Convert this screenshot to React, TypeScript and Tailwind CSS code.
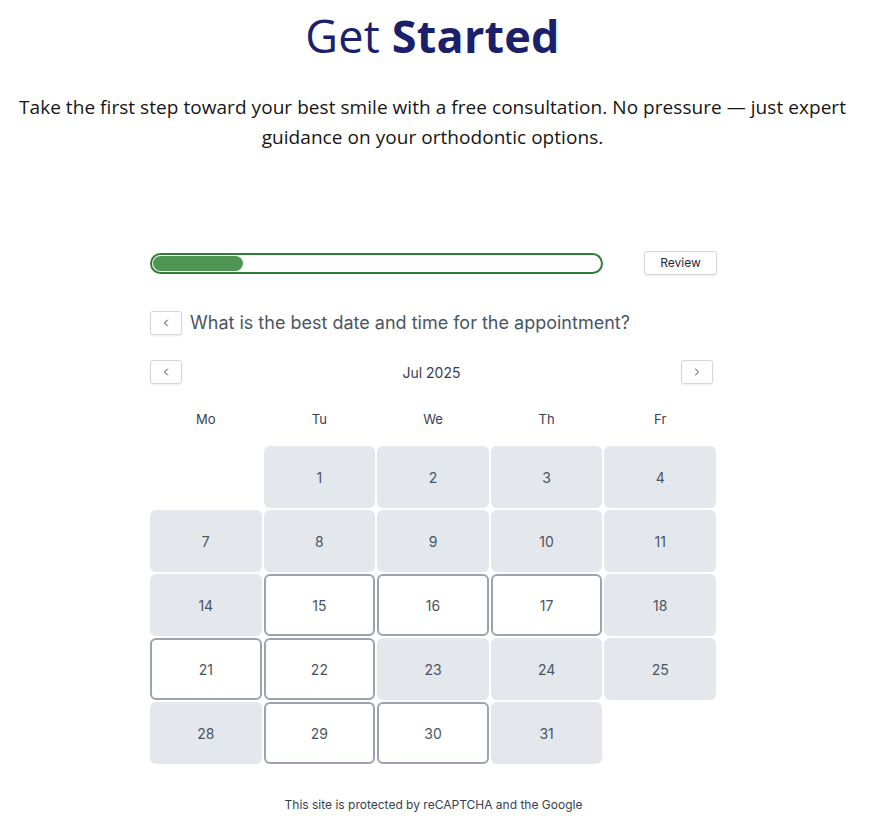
import { ChevronLeft, ChevronRight } from 'lucide-react'

const days = ['Mo', 'Tu', 'We', 'Th', 'Fr']

// d = 0 is an empty slot; open = available (outlined), otherwise grey
const weeks: { d: number; open: boolean }[][] = [
  [{ d: 0, open: false }, { d: 1, open: false }, { d: 2, open: false }, { d: 3, open: false }, { d: 4, open: false }],
  [{ d: 7, open: false }, { d: 8, open: false }, { d: 9, open: false }, { d: 10, open: false }, { d: 11, open: false }],
  [{ d: 14, open: false }, { d: 15, open: true }, { d: 16, open: true }, { d: 17, open: true }, { d: 18, open: false }],
  [{ d: 21, open: true }, { d: 22, open: true }, { d: 23, open: false }, { d: 24, open: false }, { d: 25, open: false }],
  [{ d: 28, open: false }, { d: 29, open: true }, { d: 30, open: true }, { d: 31, open: false }, { d: 0, open: false }],
]

function NavButton({ dir }: { dir: 'left' | 'right' }) {
  const Icon = dir === 'left' ? ChevronLeft : ChevronRight
  return (
    <button className="w-[32px] h-[24px] flex items-center justify-center rounded-[3px] border border-[#d4d7dc] bg-white shadow-[0_1px_2px_rgba(0,0,0,0.08)] text-[#374151]">
      <Icon className="w-3 h-3" strokeWidth={2} />
    </button>
  )
}

export default function App() {
  return (
    <div className="w-[877px] h-[832px] bg-white overflow-hidden">
      <div className="w-[865px] text-center pt-[10px]">
        <h1 className="text-[45px] leading-[52px] text-[#1b1f6c] font-['Open_Sans',sans-serif] tracking-[0.2px]">
          Get <span className="font-bold">Started</span>
        </h1>
        <p className="mt-[30px] text-[19px] leading-[30px] text-[#161616] font-['Open_Sans',sans-serif] tracking-[0.05px]">
          Take the first step toward your best smile with a free consultation. No pressure — just expert
          <br />
          guidance on your orthodontic options.
        </p>
      </div>

      <div className="w-[567px] ml-[150px] mt-[99px] font-['Inter',sans-serif]">
        <div className="flex items-center justify-between">
          <div className="w-[453px] h-[21px] rounded-full border-2 border-[#2f7d39] p-[1px]">
            <div className="w-[90px] h-full rounded-full bg-[#4f9655]" />
          </div>
          <button className="w-[73px] h-[24px] rounded-[3px] border border-[#d4d7dc] bg-white shadow-[0_1px_2px_rgba(0,0,0,0.08)] text-[12px] text-[#1f2937]">
            Review
          </button>
        </div>

        <div className="flex items-center gap-[8px] mt-[34px]">
          <NavButton dir="left" />
          <span className="text-[18px] text-[#4b5563]">What is the best date and time for the appointment?</span>
        </div>

        <div className="flex items-center justify-between mt-[24px] pr-[4px]">
          <NavButton dir="left" />
          <span className="text-[14px] text-[#374151]">Jul 2025</span>
          <NavButton dir="right" />
        </div>

        <div className="grid grid-cols-5 gap-[2px] mt-[24px] pr-[1px]">
          {days.map((d) => (
            <div key={d} className="text-center text-[13px] text-[#374151] h-[22px] leading-[22px]">
              {d}
            </div>
          ))}
        </div>

        <div className="grid grid-cols-5 gap-x-[2px] gap-y-[2px] mt-[16px] pr-[1px]">
          {weeks.flat().map((c, i) =>
            c.d === 0 ? (
              <div key={i} className="h-[62px]" />
            ) : (
              <div
                key={i}
                className={
                  c.open
                    ? 'h-[62px] rounded-[6px] border-2 border-[#9aa3af] bg-white flex items-center justify-center text-[14px] text-[#4b5563]'
                    : 'h-[62px] rounded-[6px] bg-[#e4e7eb] flex items-center justify-center text-[14px] text-[#4b5563]'
                }
              >
                {c.d}
              </div>
            ),
          )}
        </div>

        <p className="text-center text-[12px] text-[#374151] mt-[32px]">
          This site is protected by reCAPTCHA and the Google
        </p>
      </div>
    </div>
  )
}
